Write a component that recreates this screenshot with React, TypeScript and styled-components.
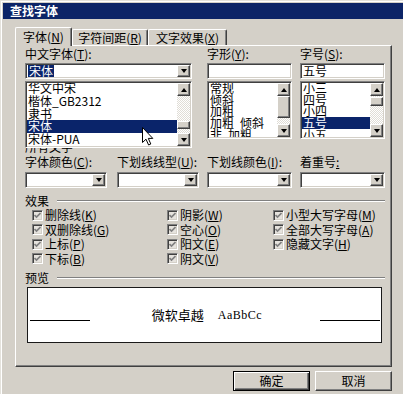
import React from "react";
import styled, { createGlobalStyle } from "styled-components";

const GlobalStyle = createGlobalStyle`
  html, body { margin: 0; padding: 0; background: #d4d0c8; overflow: hidden; }
  body {
    font-family: "Noto Sans CJK SC", "Noto Sans", sans-serif;
    font-size: 12px;
    color: #000;
  }
  u { text-decoration-thickness: 1px; text-underline-offset: 1px; }
`;

const Window = styled.div`
  width: 403px;
  height: 394px;
  box-sizing: border-box;
  padding: 3px 0 0 3px;
  background: #d4d0c8;
  box-shadow: inset 1px 1px #e4e2dc, inset 2px 2px #fff;
  overflow: hidden;
`;

const TitleBar = styled.div`
  height: 16px;
  background: #0c2467;
  color: #fff;
  font-weight: bold;
  font-size: 12px;
  line-height: 16px;
  padding-left: 7px;
`;

const Body = styled.div`
  padding: 8px 0 0 12px;
`;

const TabRow = styled.div`
  display: flex;
  align-items: flex-end;
  height: 18px;
`;

const Tab = styled.div<{ $active?: boolean; $w: number }>`
  position: relative;
  z-index: ${(p) => (p.$active ? 1 : 0)};
  width: ${(p) => p.$w}px;
  height: ${(p) => (p.$active ? 19 : 16)}px;
  margin-bottom: ${(p) => (p.$active ? -1 : 0)}px;
  box-sizing: border-box;
  background: #d4d0c8;
  border-top: 1px solid #fff;
  border-left: 1px solid #fff;
  border-right: 1px solid #404040;
  box-shadow: inset -1px 0 #808080;
  border-radius: 2px 2px 0 0;
  display: flex;
  align-items: center;
  justify-content: center;
  padding-bottom: ${(p) => (p.$active ? 1 : 0)}px;
  font-size: 12px;
  line-height: 14px;
  white-space: nowrap;
`;

const Panel = styled.div`
  width: 377px;
  height: 322px;
  box-sizing: border-box;
  border-top: 1px solid #fff;
  border-left: 1px solid #fff;
  border-right: 1px solid #404040;
  border-bottom: 1px solid #404040;
  box-shadow: inset -1px -1px #808080;
  padding: 1px 0 0 9px;
`;

const FlexRow = styled.div<{ $mt?: number }>`
  display: flex;
  align-items: flex-start;
  margin-top: ${(p) => p.$mt ?? 0}px;
`;

const Column = styled.div<{ $w: number; $ml?: number }>`
  width: ${(p) => p.$w}px;
  margin-left: ${(p) => p.$ml ?? 0}px;
  display: flex;
  flex-direction: column;
`;

const Label = styled.div`
  height: 14px;
  line-height: 14px;
  font-size: 12px;
  white-space: nowrap;
`;

const Field = styled.div<{ $mt?: number }>`
  height: 16px;
  margin-top: ${(p) => p.$mt ?? 2}px;
  box-sizing: border-box;
  background: #fff;
  border: 1px solid;
  border-color: #808080 #fff #fff #808080;
  box-shadow: inset 1px 1px #404040, inset -1px -1px #d4d0c8;
  display: flex;
  align-items: center;
  padding: 0 1px 0 2px;
  font-size: 12px;
  line-height: 12px;
  white-space: nowrap;
`;

const Selected = styled.span`
  background: #0a246a;
  color: #fff;
  padding: 0 1px;
  line-height: 12px;
`;

const Raised = styled.div`
  box-sizing: border-box;
  background: #d4d0c8;
  border: 1px solid;
  border-color: #fff #404040 #404040 #fff;
  box-shadow: inset -1px -1px #808080;
  display: flex;
  align-items: center;
  justify-content: center;
`;

const DropButton = styled(Raised)`
  margin-left: auto;
  width: 13px;
  height: 12px;
`;

const Triangle = styled.div<{ $up?: boolean }>`
  width: 0;
  height: 0;
  border-left: 3.5px solid transparent;
  border-right: 3.5px solid transparent;
  ${(p) =>
    p.$up ? "border-bottom: 4px solid #000;" : "border-top: 4px solid #000;"}
`;

const ListBox = styled.div<{ $h: number }>`
  position: relative;
  height: ${(p) => p.$h}px;
  margin-top: 2px;
  box-sizing: border-box;
  background: #fff;
  border: 1px solid;
  border-color: #808080 #fff #fff #808080;
  box-shadow: inset 1px 1px #404040, inset -1px -1px #d4d0c8;
  padding: 1px;
  display: flex;
`;

const Items = styled.div`
  flex: 1;
  overflow: hidden;
`;

const ItemsInner = styled.div`
  margin-top: -1px;
`;

const Item = styled.div<{ $sel?: boolean; $h: number; $fs: number }>`
  height: ${(p) => p.$h}px;
  line-height: ${(p) => p.$h}px;
  padding-left: 1px;
  font-size: ${(p) => p.$fs}px;
  white-space: pre;
  background: ${(p) => (p.$sel ? "#0a246a" : "transparent")};
  color: ${(p) => (p.$sel ? "#fff" : "#000")};
`;

const ScrollBar = styled.div`
  width: 13px;
  display: flex;
  flex-direction: column;
  background-color: #eeece8;
  background-image: repeating-conic-gradient(#fff 0 25%, #e0ddd6 0 50%);
  background-size: 2px 2px;
`;

const ScrollArrow = styled(Raised)`
  width: 13px;
  height: 13px;
  flex: none;
`;

const Track = styled.div<{ $pt: number }>`
  flex: 1;
  padding-top: ${(p) => p.$pt}px;
`;

const Thumb = styled(Raised)<{ $h: number }>`
  width: 13px;
  height: ${(p) => p.$h}px;
`;

const Pointer = styled.svg`
  position: absolute;
  left: 116px;
  top: 45px;
  pointer-events: none;
`;

const ClipLabel = styled.div`
  height: 5px;
  overflow: hidden;
`;

const ClipInner = styled.div`
  margin-top: -8px;
  height: 14px;
  line-height: 14px;
  font-size: 12px;
`;

const SectionHeader = styled.div<{ $mt: number }>`
  display: flex;
  align-items: center;
  width: 360px;
  height: 14px;
  margin-top: ${(p) => p.$mt}px;
  line-height: 14px;
`;

const Rule = styled.div`
  flex: 1;
  margin-left: 8px;
  border-top: 1px solid #808080;
  border-bottom: 1px solid #fff;
`;

const EffectGrid = styled.div`
  display: grid;
  grid-template-columns: 135px 106px 1fr;
  grid-template-rows: repeat(4, 14.5px);
  grid-auto-flow: column;
  padding-left: 7px;
`;

const CheckItem = styled.div`
  display: flex;
  align-items: center;
  gap: 2px;
  font-size: 12px;
  line-height: 14px;
  white-space: nowrap;
`;

const CheckBox = styled.div`
  width: 11px;
  height: 11px;
  box-sizing: border-box;
  border: 1px solid;
  border-color: #808080 #fff #fff #808080;
  box-shadow: inset 1px 1px #404040, inset -1px -1px #d4d0c8;
  background: #e6e3de;
  display: flex;
  align-items: center;
  justify-content: center;
`;

const PreviewBox = styled.div`
  margin: 2px 0 0 2px;
  width: 355px;
  height: 56px;
  box-sizing: border-box;
  background: #fff;
  border: 1px solid #1a1a1a;
  display: flex;
  align-items: center;
  justify-content: space-between;
  padding: 0 1px 0 2px;
`;

const PreviewLine = styled.div`
  width: 60px;
  height: 1px;
  margin-top: 10px;
  background: #000;
`;

const SampleText = styled.div`
  display: flex;
  align-items: center;
  gap: 14px;
  margin-left: 4px;
`;

const SampleCJK = styled.span`
  font-size: 13px;
  line-height: 16px;
`;

const SampleLatin = styled.span`
  font-family: "Liberation Serif", serif;
  font-size: 12px;
  letter-spacing: 0.5px;
  line-height: 16px;
`;

const ButtonRow = styled.div`
  display: flex;
  justify-content: flex-end;
  gap: 5px;
  width: 377px;
  margin-top: 4px;
`;

const Button = styled.div<{ $default?: boolean }>`
  width: 77px;
  height: 20px;
  box-sizing: border-box;
  background: #d4d0c8;
  border: 1px solid;
  border-color: ${(p) => (p.$default ? "#000" : "#fff #404040 #404040 #fff")};
  box-shadow: ${(p) =>
    p.$default
      ? "inset 1px 1px #fff, inset -1px -1px #404040, inset -2px -2px #808080"
      : "inset -1px -1px #808080"};
  display: flex;
  align-items: center;
  justify-content: center;
  font-size: 12px;
  line-height: 14px;
`;

const Check = () => (
  <svg width="7" height="7" viewBox="0 0 7 7">
    <polyline
      points="0.5,3 2.5,5 6.5,1"
      fill="none"
      stroke="#808080"
      strokeWidth="1.7"
    />
  </svg>
);

type ListProps = {
  h: number;
  itemH: number;
  fs: number;
  items: string[];
  sel?: number;
  thumbTop: number;
  thumbH: number;
  children?: React.ReactNode;
};

const List = ({ h, itemH, fs, items, sel, thumbTop, thumbH, children }: ListProps) => (
  <ListBox $h={h}>
    <Items>
      <ItemsInner>
        {items.map((t, i) => (
          <Item key={t + i} $h={itemH} $fs={fs} $sel={i === sel}>
            {t}
          </Item>
        ))}
      </ItemsInner>
    </Items>
    <ScrollBar>
      <ScrollArrow>
        <Triangle $up />
      </ScrollArrow>
      <Track $pt={thumbTop}>
        <Thumb $h={thumbH} />
      </Track>
      <ScrollArrow>
        <Triangle />
      </ScrollArrow>
    </ScrollBar>
    {children}
  </ListBox>
);

const Combo = () => (
  <Field $mt={3}>
    <DropButton>
      <Triangle />
    </DropButton>
  </Field>
);

const effects: [string, string][] = [
  ["删除线", "K"],
  ["双删除线", "G"],
  ["上标", "P"],
  ["下标", "B"],
  ["阴影", "W"],
  ["空心", "O"],
  ["阳文", "E"],
  ["阴文", "V"],
  ["小型大写字母", "M"],
  ["全部大写字母", "A"],
  ["隐藏文字", "H"],
];

export default function App() {
  return (
    <>
      <GlobalStyle />
      <Window>
        <TitleBar>查找字体</TitleBar>
        <Body>
          <TabRow>
            <Tab $active $w={57}>
              字体(<u>N</u>)
            </Tab>
            <Tab $w={76}>
              字符间距(<u>R</u>)
            </Tab>
            <Tab $w={79}>
              文字效果(<u>X</u>)
            </Tab>
          </TabRow>
          <Panel>
            <FlexRow>
              <Column $w={167}>
                <Label>
                  中文字体(<u>T</u>):
                </Label>
                <Field>
                  <Selected>宋体</Selected>
                  <DropButton>
                    <Triangle />
                  </DropButton>
                </Field>
                <List
                  h={67}
                  itemH={12.8}
                  fs={12}
                  items={["华文中宋", "楷体_GB2312", "隶书", "宋体", "宋体-PUA"]}
                  sel={3}
                  thumbTop={25}
                  thumbH={8}
                >
                  <Pointer width="12" height="19" viewBox="0 0 12 19">
                    <path
                      d="M0.5 0.5 L0.5 15.5 L4 12.2 L6.6 18 L8.8 17 L6.3 11.4 L10.8 11.4 Z"
                      fill="#fff"
                      stroke="#000"
                      strokeWidth="1"
                      strokeLinejoin="miter"
                    />
                  </Pointer>
                </List>
                <ClipLabel>
                  <ClipInner>所有文字</ClipInner>
                </ClipLabel>
              </Column>
              <Column $w={85} $ml={15}>
                <Label>
                  字形(<u>Y</u>):
                </Label>
                <Field />
                <List
                  h={58}
                  itemH={11.7}
                  fs={12}
                  items={["常规", "倾斜", "加粗", "加粗\u2002倾斜", "非\u2002加粗"]}
                  thumbTop={0}
                  thumbH={22}
                />
              </Column>
              <Column $w={85} $ml={8}>
                <Label>
                  字号(<u>S</u>):
                </Label>
                <Field>五号</Field>
                <List
                  h={58}
                  itemH={11.7}
                  fs={12}
                  items={["小三", "四号", "小四", "五号", "小五"]}
                  sel={3}
                  thumbTop={1}
                  thumbH={9}
                />
              </Column>
            </FlexRow>

            <FlexRow $mt={2}>
              <Column $w={82}>
                <Label>
                  字体颜色(<u>C</u>):
                </Label>
                <Combo />
              </Column>
              <Column $w={82} $ml={10}>
                <Label>
                  下划线线型(<u>U</u>):
                </Label>
                <Combo />
              </Column>
              <Column $w={85} $ml={8}>
                <Label>
                  下划线颜色(<u>I</u>):
                </Label>
                <Combo />
              </Column>
              <Column $w={85} $ml={8}>
                <Label>
                  着重号<u>:</u>
                </Label>
                <Combo />
              </Column>
            </FlexRow>

            <SectionHeader $mt={6}>
              效果
              <Rule />
            </SectionHeader>
            <EffectGrid>
              {effects.map(([t, k]) => (
                <CheckItem key={t}>
                  <CheckBox>
                    <Check />
                  </CheckBox>
                  <span>
                    {t}(<u>{k}</u>)
                  </span>
                </CheckItem>
              ))}
            </EffectGrid>

            <SectionHeader $mt={5}>
              预览
              <Rule />
            </SectionHeader>
            <PreviewBox>
              <PreviewLine />
              <SampleText>
                <SampleCJK>微软卓越</SampleCJK>
                <SampleLatin>AaBbCc</SampleLatin>
              </SampleText>
              <PreviewLine />
            </PreviewBox>
          </Panel>
          <ButtonRow>
            <Button $default>确定</Button>
            <Button>取消</Button>
          </ButtonRow>
        </Body>
      </Window>
    </>
  );
}
